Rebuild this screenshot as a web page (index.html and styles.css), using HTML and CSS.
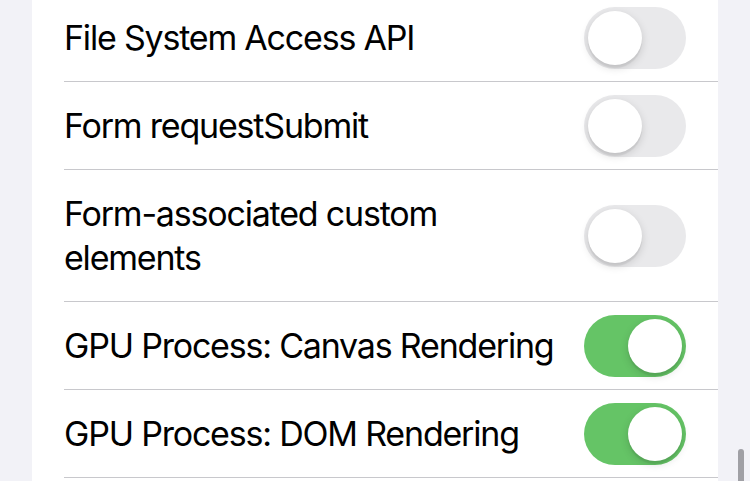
FILE: index.html
```html
<!DOCTYPE html>
<html lang="en">
<head>
<meta charset="utf-8">
<title>Experimental Features</title>
<link rel="stylesheet" href="styles.css">
</head>
<body>
<div class="page">
  <ul class="card">
    <li class="row"><span class="label">File System Access API</span><span class="switch"><span class="knob"></span></span></li>
    <li class="row"><span class="label">Form requestSubmit</span><span class="switch"><span class="knob"></span></span></li>
    <li class="row"><span class="label">Form-associated custom elements</span><span class="switch"><span class="knob"></span></span></li>
    <li class="row"><span class="label">GPU Process: Canvas Rendering</span><span class="switch on"><span class="knob"></span></span></li>
    <li class="row"><span class="label">GPU Process: DOM Rendering</span><span class="switch on"><span class="knob"></span></span></li>
  </ul>
  <div class="scrollbar"></div>
</div>
</body>
</html>
```

FILE: styles.css
```css
html, body {
  margin: 0;
  padding: 0;
  height: 100%;
  overflow: hidden;
  background: #f2f2f7;
}
body {
  font-family: Inter, "Noto Sans", "Liberation Sans", sans-serif;
  color: #000;
}
.page {
  position: relative;
  height: 100%;
  padding: 0 32px;
}
.card {
  list-style: none;
  margin: -6px 0 0;
  padding: 0 0 0 32px;
  background: #fff;
  height: calc(100% + 6px);
  overflow: hidden;
}
.row {
  box-sizing: border-box;
  display: flex;
  align-items: center;
  gap: 12px;
  min-height: 88px;
  padding: 0 32px 0 0;
  border-bottom: 1px solid #c8c8cc;
}
.label {
  flex: 1;
  min-width: 0;
  padding: 22px 0 21px;
  font-size: 34px;
  line-height: 44px;
  letter-spacing: -1.2px;
}
.switch {
  flex: none;
  position: relative;
  width: 102px;
  height: 62px;
  border-radius: 31px;
  background: #e9e9eb;
  margin-left: auto;
}
.switch .knob {
  position: absolute;
  top: 4px;
  left: 4px;
  width: 54px;
  height: 54px;
  border-radius: 50%;
  background: #fff;
  box-shadow: 0 3px 8px rgba(0, 0, 0, 0.15), 0 3px 1px rgba(0, 0, 0, 0.06);
}
.switch.on {
  background: #65c466;
}
.switch.on .knob {
  left: 44px;
}
.scrollbar {
  position: absolute;
  right: 6px;
  top: 455px;
  width: 6px;
  height: 40px;
  border-radius: 3px;
  background: #a0a0a5;
}
```
